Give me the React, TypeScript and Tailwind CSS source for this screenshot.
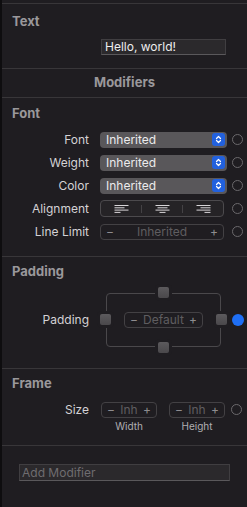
import React from 'react'

const font = { fontFamily: 'Inter, "Liberation Sans", sans-serif' }

function Circle({ filled = false }: { filled?: boolean }) {
  return filled ? (
    <div className="w-[11px] h-[11px] rounded-full bg-[#1f6ff5]" />
  ) : (
    <div className="w-[11px] h-[11px] rounded-full border border-[#6b696c]" />
  )
}

function SectionHeader({ title }: { title: string }) {
  return <div className="text-[13px] font-bold text-[#9a989b] leading-4">{title}</div>
}

function Row({ label, children, filled = false }: { label: string; children: React.ReactNode; filled?: boolean }) {
  return (
    <div className="flex items-center h-[23px]">
      <div className="w-[89px] text-right text-[12px] text-[#d4d2d5]">{label}</div>
      <div className="ml-[11px] w-[127px]">{children}</div>
      <div className="ml-[5px]">
        <Circle filled={filled} />
      </div>
    </div>
  )
}

function Popup({ value }: { value: string }) {
  return (
    <div className="flex items-center h-[16px] rounded-[4px] bg-[#59575a] pl-[6px] pr-[2px]">
      <span className="flex-1 text-[12px] text-[#ecebec] leading-none">{value}</span>
      <div className="w-[13px] h-[13px] rounded-[3px] bg-[#2261de] flex items-center justify-center">
        <svg width="7" height="9" viewBox="0 0 7 9" fill="none" stroke="white" strokeWidth="1.2" strokeLinecap="round" strokeLinejoin="round">
          <path d="M1.5 3.5 L3.5 1.5 L5.5 3.5" />
          <path d="M1.5 5.5 L3.5 7.5 L5.5 5.5" />
        </svg>
      </div>
    </div>
  )
}

function AlignIcon({ kind }: { kind: 'left' | 'center' | 'right' }) {
  const lines = [
    [0, 14],
    [kind === 'left' ? 0 : kind === 'center' ? 2 : 4, kind === 'left' ? 10 : kind === 'center' ? 12 : 14],
    [0, 14],
    [kind === 'left' ? 0 : kind === 'center' ? 4 : 8, kind === 'left' ? 6 : kind === 'center' ? 10 : 14],
  ]
  return (
    <svg width="15" height="10" viewBox="0 0 15 10" stroke="#d8d6d9" strokeWidth="1">
      {lines.map(([a, b], i) => (
        <line key={i} x1={a + 0.5} x2={b + 0.5} y1={1.5 + i * 2.3} y2={1.5 + i * 2.3} />
      ))}
    </svg>
  )
}

function Alignment() {
  return (
    <div className="flex items-center h-[17px] w-[124px] rounded-[4px] border border-[#4c4a4d] bg-[#252326]">
      <div className="flex-1 flex justify-center">
        <AlignIcon kind="left" />
      </div>
      <div className="w-px h-[8px] bg-[#444245]" />
      <div className="flex-1 flex justify-center">
        <AlignIcon kind="center" />
      </div>
      <div className="w-px h-[8px] bg-[#444245]" />
      <div className="flex-1 flex justify-center">
        <AlignIcon kind="right" />
      </div>
    </div>
  )
}

function Stepper({ value, className = '' }: { value: string; className?: string }) {
  return (
    <div className={`flex items-center justify-between h-[16px] rounded-[4px] border border-[#434144] px-[5px] text-[12px] leading-none ${className}`}>
      <span className="text-[#8e8c8f]">−</span>
      <span className="text-[#5f5d60]">{value}</span>
      <span className="text-[#8e8c8f]">+</span>
    </div>
  )
}

function Handle({ className }: { className: string }) {
  return (
    <div
      className={`absolute w-[11px] h-[11px] rounded-[2px] bg-gradient-to-b from-[#5c5a5d] to-[#4a484b] ring-[3px] ring-[#1f1d21] ${className}`}
    />
  )
}

function PaddingBox() {
  return (
    <div className="relative w-[127px] h-[66px]">
      <div className="absolute left-[6px] right-[6px] top-[6px] bottom-[6px] rounded-[4px] border border-[#4a484b]" />
      <Handle className="left-[58px] top-0" />
      <Handle className="left-[58px] bottom-0" />
      <Handle className="left-0 top-[27px]" />
      <Handle className="right-0 top-[27px]" />
      <div className="absolute left-[24px] top-[25px] w-[79px]">
        <Stepper value="Default" className="bg-[#1f1d21]" />
      </div>
    </div>
  )
}

export default function App() {
  return (
    <div style={font} className="w-[247px] h-[507px] bg-[#1f1d21] border-l-2 border-[#0e0d0f] overflow-hidden">
      <div className="h-[3px]" />
      <div className="border-t border-[#383639] h-[65px] pl-[10px] pt-[9px]">
        <SectionHeader title="Text" />
        <div className="ml-[89px] mt-[10px] w-[125px] h-[16px] bg-[#2b292c] border border-[#403e41] border-b-[#5a585b] flex items-center pl-[3px] text-[12px] text-[#eeeeee] leading-none">
          Hello, world!
        </div>
      </div>
      <div className="border-t border-[#383639] h-[29px] flex items-center justify-center text-[13px] font-bold text-[#9a989b]">
        Modifiers
      </div>
      <div className="border-t border-[#383639] h-[159px] pt-[7px]">
        <div className="pl-[10px]">
          <SectionHeader title="Font" />
        </div>
        <div className="mt-[7px] -ml-[2px]">
          <Row label="Font">
            <Popup value="Inherited" />
          </Row>
          <Row label="Weight">
            <Popup value="Inherited" />
          </Row>
          <Row label="Color">
            <Popup value="Inherited" />
          </Row>
          <Row label="Alignment">
            <Alignment />
          </Row>
          <Row label="Line Limit">
            <Stepper value="Inherited" className="w-[124px]" />
          </Row>
        </div>
      </div>
      <div className="border-t border-[#383639] h-[112px] pt-[6px]">
        <div className="pl-[10px]">
          <SectionHeader title="Padding" />
        </div>
        <div className="mt-[8px] -ml-[2px] flex items-center">
          <div className="w-[89px] text-right text-[12px] text-[#d4d2d5]">Padding</div>
          <div className="ml-[11px]">
            <PaddingBox />
          </div>
          <div className="ml-[5px]">
            <div className="w-[12px] h-[12px] rounded-full bg-[#1f6ff5]" />
          </div>
        </div>
      </div>
      <div className="border-t border-[#383639] h-[77px] pt-[6px]">
        <div className="pl-[10px]">
          <SectionHeader title="Frame" />
        </div>
        <div className="mt-[11px] -ml-[2px] flex items-start">
          <div className="w-[89px] text-right text-[12px] text-[#d4d2d5] leading-[16px]">Size</div>
          <div className="ml-[12px] flex gap-[12px]">
            <div className="flex flex-col items-center">
              <Stepper value="Inh" className="w-[56px]" />
              <span className="mt-[1px] text-[10px] text-[#b0aeb1]">Width</span>
            </div>
            <div className="flex flex-col items-center">
              <Stepper value="Inh" className="w-[56px]" />
              <span className="mt-[1px] text-[10px] text-[#b0aeb1]">Height</span>
            </div>
          </div>
          <div className="ml-[6px] mt-[2px]">
            <Circle />
          </div>
        </div>
      </div>
      <div className="border-t border-[#383639] pt-[18px] pl-[17px]">
        <div className="w-[211px] h-[17px] bg-[#2b292c] border border-[#403e41] border-b-[#5a585b] flex items-center pl-[2px] text-[12px] text-[#6f6d70] leading-none">
          Add Modifier
        </div>
      </div>
    </div>
  )
}
